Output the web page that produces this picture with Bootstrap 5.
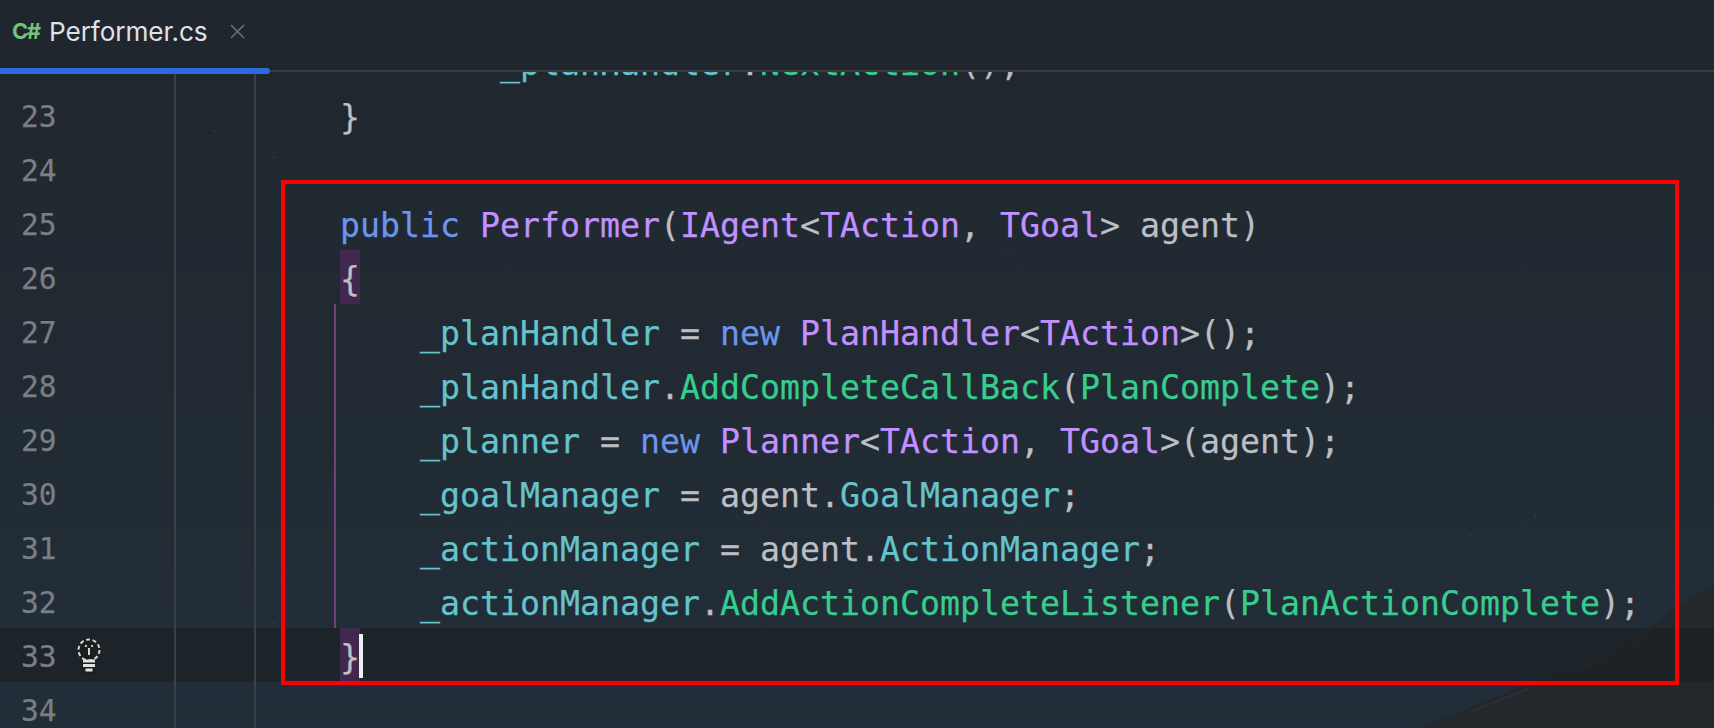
<!DOCTYPE html>
<html lang="en"><head><meta charset="utf-8"><title>Performer.cs</title>
<link href="https://cdn.jsdelivr.net/npm/bootstrap@5.3.0/dist/css/bootstrap.min.css" rel="stylesheet">
<style>
html,body{height:728px;overflow:hidden}
body{background:linear-gradient(180deg,#20262e 0%,#212a32 45%,#212e39 100%);position:relative}
.wall{position:absolute;left:0;top:0;width:1714px;height:728px;z-index:0}
.tabbar{height:72px;position:relative;z-index:2;background:#20262e;border-bottom:2px solid #3b3b3d}
.tabitem{width:270px;height:72px;position:relative;padding-left:12px;padding-bottom:10px}
.tabitem::after{content:"";position:absolute;left:0;right:0;bottom:-2px;height:6px;background:#2e6bdc;border-radius:0 3px 3px 0}
.cs{font:700 22px Inter,sans-serif;color:#76c27a;letter-spacing:-1.4px;margin-right:11px;width:26px;flex:none}
.fname{font:400 26.2px Inter,sans-serif;color:#dfe1e5;letter-spacing:-.1px}
.closex{margin-left:22px;display:block;flex:none}
.editor{height:656px;overflow:hidden;position:relative;z-index:1}
.lrow{height:54px;font:400 33.22px/60px "DejaVu Sans Mono",monospace;white-space:pre;color:#bcbec4;-webkit-text-stroke:.25px currentColor}
.lrow.first{margin-top:-38px}
.lrow.cur{background:rgba(24,28,28,.5)}
.lnum{width:176px;flex:none;border-right:2px solid #3d4043;padding-left:21px;font-size:29.5px;line-height:59px;color:#7b7e82;position:relative}
.fold{width:80px;flex:none;border-right:2px solid #3d4043}
.guide{width:84px;flex:none;position:relative}
.guide.on::after,.guide.grey::after{content:"";position:absolute;left:78px;top:0;bottom:0;width:2px;background:#75407a}
.guide.grey::after{background:#4a4a4c;height:16px;bottom:auto}
.bulb{position:absolute;left:74px;top:7px}
.kw{color:#6c95eb}.ty{color:#c191ff}.fd{color:#66c3cc}.fn{color:#39cc8f}
.pair{background:#42284f;display:inline-block;width:20px;height:54px;vertical-align:top}
.caret{display:inline-block;width:4px;height:44px;background:#eceff1;vertical-align:top;margin-top:6px;margin-left:-1px}
.redbox{position:absolute;left:281px;top:180px;width:1398px;height:505px;border:4px solid #fe0000;z-index:3;pointer-events:none}
</style></head><body>
<svg class="wall" viewBox="0 0 1714 728" aria-hidden="true">
<path d="M1420 728L1517 688 1567 671 1617 651 1640 635 1680 605 1714 585V728Z" fill="#24282c"/>
<path d="M1470 712L1530 688M1575 672L1612 655M1632 645L1650 628" stroke="#2c3033" stroke-width="2" fill="none"/>
<g fill="#343c44"><circle cx="214" cy="131" r="1"/><circle cx="274" cy="157" r="1"/><circle cx="1470" cy="535" r="1"/><circle cx="1535" cy="515" r="1"/><circle cx="1008" cy="250" r="1"/><circle cx="1120" cy="330" r="1"/><circle cx="620" cy="400" r="1"/><circle cx="274" cy="623" r="1"/><circle cx="1387" cy="552" r="1"/></g>
</svg>
<div class="tabbar d-flex">
<div class="tabitem d-flex align-items-center"><span class="cs">C#</span><span class="fname">Performer.cs</span>
<svg class="closex" width="15" height="15" viewBox="0 0 15 15"><path d="M1 1l13 13M14 1L1 14" stroke="#6b6e73" stroke-width="1.7" fill="none"/></svg></div>
</div>
<div class="editor">
<div class="lrow first d-flex"><div class="lnum">22</div><div class="fold"></div><div class="guide grey"></div><div class="code">        <span class="fd">_planHandler</span>.<span class="fn">NextAction</span>();</div></div>
<div class="lrow d-flex"><div class="lnum">23</div><div class="fold"></div><div class="guide"></div><div class="code">}</div></div>
<div class="lrow d-flex"><div class="lnum">24</div><div class="fold"></div><div class="guide"></div><div class="code"></div></div>
<div class="lrow d-flex"><div class="lnum">25</div><div class="fold"></div><div class="guide"></div><div class="code"><span class="kw">public</span> <span class="ty">Performer</span>(<span class="ty">IAgent</span>&lt;<span class="ty">TAction</span>, <span class="ty">TGoal</span>&gt; agent)</div></div>
<div class="lrow d-flex"><div class="lnum">26</div><div class="fold"></div><div class="guide"></div><div class="code"><span class="pair">{</span></div></div>
<div class="lrow d-flex"><div class="lnum">27</div><div class="fold"></div><div class="guide on"></div><div class="code">    <span class="fd">_planHandler</span> = <span class="kw">new</span> <span class="ty">PlanHandler</span>&lt;<span class="ty">TAction</span>&gt;();</div></div>
<div class="lrow d-flex"><div class="lnum">28</div><div class="fold"></div><div class="guide on"></div><div class="code">    <span class="fd">_planHandler</span>.<span class="fn">AddCompleteCallBack</span>(<span class="fn">PlanComplete</span>);</div></div>
<div class="lrow d-flex"><div class="lnum">29</div><div class="fold"></div><div class="guide on"></div><div class="code">    <span class="fd">_planner</span> = <span class="kw">new</span> <span class="ty">Planner</span>&lt;<span class="ty">TAction</span>, <span class="ty">TGoal</span>&gt;(agent);</div></div>
<div class="lrow d-flex"><div class="lnum">30</div><div class="fold"></div><div class="guide on"></div><div class="code">    <span class="fd">_goalManager</span> = agent.<span class="fd">GoalManager</span>;</div></div>
<div class="lrow d-flex"><div class="lnum">31</div><div class="fold"></div><div class="guide on"></div><div class="code">    <span class="fd">_actionManager</span> = agent.<span class="fd">ActionManager</span>;</div></div>
<div class="lrow d-flex"><div class="lnum">32</div><div class="fold"></div><div class="guide on"></div><div class="code">    <span class="fd">_actionManager</span>.<span class="fn">AddActionCompleteListener</span>(<span class="fn">PlanActionComplete</span>);</div></div>
<div class="lrow cur d-flex"><div class="lnum">33<svg class="bulb" width="30" height="40" viewBox="0 0 30 40"><circle cx="15" cy="15" r="12" fill="#1c1f20"/><rect x="7" y="24" width="16" height="15" rx="4" fill="#1c1f20"/><circle cx="15" cy="15" r="10.500" fill="none" stroke="#d6d6d6" stroke-width="2" stroke-dasharray="4 2.600"/><path d="M11 11h1.800M17.200 11H19M15 13v7" stroke="#d6d6d6" stroke-width="2" fill="none"/><path d="M9 26h12M9 30.500h12M11.500 35h7" stroke="#e2e2e2" stroke-width="2.800"/></svg></div><div class="fold"></div><div class="guide"></div><div class="code"><span class="pair">}</span><span class="caret"></span></div></div>
<div class="lrow d-flex"><div class="lnum">34</div><div class="fold"></div><div class="guide"></div><div class="code"></div></div>
</div>
<div class="redbox"></div>
<script src="https://cdn.jsdelivr.net/npm/bootstrap@5.3.0/dist/js/bootstrap.bundle.min.js"></script>
</body></html>
